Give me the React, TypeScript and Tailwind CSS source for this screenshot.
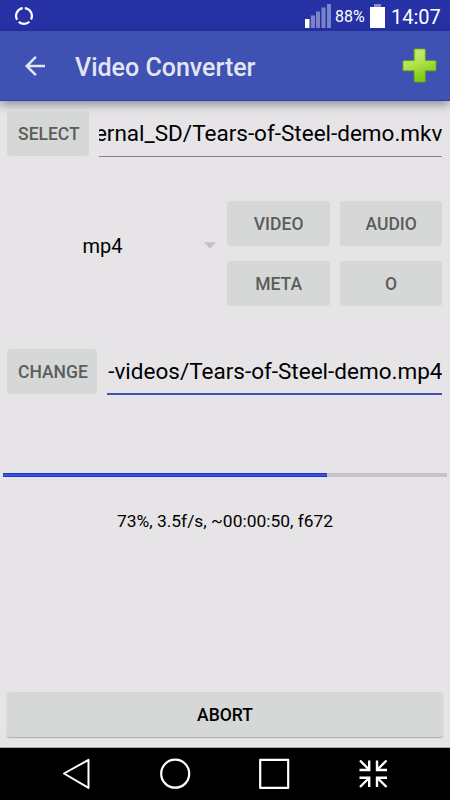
import React, { useState } from "react";

const buttonClass =
  "flex h-[45px] items-center justify-center rounded-[3px] bg-[#d6d8d7] pt-[3px] text-[17.5px] leading-none font-medium";

const StatusBar: React.FC = () => {
  return (
    <div className="flex h-[31px] items-center bg-[#2631a5] text-white">
      <svg className="ml-[14px] h-5 w-5" viewBox="0 0 20 20" fill="none" stroke="white" strokeWidth="2.2">
        <path d="M10.8 2.1A7.9 7.9 0 0 1 17 13.6" />
        <path d="M15.4 15.8A7.9 7.9 0 0 1 4.8 15.9" />
        <path d="M3.1 13.8A7.9 7.9 0 0 1 8.7 2.1" />
      </svg>
      <svg className="ml-auto h-6 w-[26px]" viewBox="0 0 26 24" fill="#7d83ca">
        <path fill="white" d="M0 15h4.5v9H0z" />
        <path d="M5.8 11.5H10V24H5.8zM11 7.500h4V24h-4zM16.500 3.500h4V24h-4zM22 0h4v24h-4z" />
      </svg>
      <span className="ml-[4px] w-[30px] pt-[2px] text-[16px] leading-none whitespace-nowrap">88%</span>
      <svg className="ml-[4px] h-6 w-4" viewBox="0 0 16 24">
        <path fill="#858bcd" d="M5 0h7v3H5z" />
        <path fill="white" d="M1 3h15v21H1z" />
      </svg>
      <span className="mr-[9px] ml-[6px] w-[50px] pt-[2px] text-[20px] leading-none whitespace-nowrap">14:07</span>
    </div>
  );
};

const AppBar: React.FC = () => {
  return (
    <header className="flex h-[70px] items-center border-b border-[#2742bd] bg-[#3f51b2] pr-[13px] pl-[20px] shadow-[0_4px_9px_rgba(0,0,0,0.35)]">
      <svg className="h-[30px] w-[30px]" viewBox="0 0 24 24" fill="#e4e5f4">
        <path d="M20 11H7.830l5.590-5.590L12 4l-8 8 8 8 1.410-1.410L7.830 13H20v-2z" />
      </svg>
      <h1 className="ml-[25px] pt-[4px] text-[25px] leading-none font-medium text-[#e4e5f4]">Video Converter</h1>
      <svg className="ml-auto h-[35px] w-[35px]" viewBox="0 0 36 36">
        <defs>
          <linearGradient id="plusFill" x1="0" y1="0" x2="0.4" y2="1">
            <stop offset="0" stopColor="#d3ef83" />
            <stop offset="0.5" stopColor="#b4e351" />
            <stop offset="1" stopColor="#7cca0c" />
          </linearGradient>
        </defs>
        <path
          d="M13.500 1h9.500q1 0 1 1V13h10q1 0 1 1v8.500q0 1-1 1H24V34q0 1-1 1h-9.500q-1 0-1-1V23.500H2q-1 0-1-1V14q0-1 1-1h10.500V2q0-1 1-1z"
          fill="url(#plusFill)"
          stroke="#65a51b"
          strokeWidth="0.8"
        />
        <path d="M13.700 13.800V2h9.200V14h10.500" fill="none" stroke="#a9e336" strokeWidth="1" />
      </svg>
    </header>
  );
};

// Single line path field, long paths are cut on the left
const PathField: React.FC<{ value: string; className: string }> = ({ value, className }) => {
  return (
    <div className={`ml-[10px] flex h-[46px] min-w-0 flex-1 items-center justify-end overflow-hidden ${className}`}>
      <span className="shrink-0 text-[22.5px] leading-none whitespace-nowrap">{value}</span>
    </div>
  );
};

const NavBar: React.FC = () => {
  return (
    <nav className="flex h-[53px] items-center border-t border-[#a6a5a8] bg-black">
      <svg className="ml-[62px] h-8 w-7" viewBox="0 0 28 32" fill="none" stroke="white" strokeWidth="2" strokeLinejoin="round">
        <path d="M26.500 1.900V29.900L2 15.500z" />
      </svg>
      <svg className="ml-[69px] h-8 w-8" viewBox="0 0 32 32" fill="none" stroke="white" strokeWidth="2.200">
        <circle cx="16.200" cy="15.700" r="14" />
      </svg>
      <svg className="ml-[67px] h-8 w-8" viewBox="0 0 32 32" fill="none" stroke="white" strokeWidth="2.200" strokeLinejoin="round">
        <path d="M2.200 1.900h28v28h-28z" />
      </svg>
      <svg className="ml-[67px] h-8 w-8" viewBox="0 0 32 32" fill="none" stroke="white" strokeWidth="2.400">
        <path d="M3 2.500l9 9M12.200 2.500V12H2.500" />
        <path d="M29.500 2.500l-9 9M20 2.500V12h10" />
        <path d="M3 29l9-9M12.200 29v-9.300H2.500" />
        <path d="M29.500 29l-9-9M20 29v-9.300h10" />
      </svg>
    </nav>
  );
};

const App: React.FC = () => {
  const [input] = useState("ernal_SD/Tears-of-Steel-demo.mkv");
  const [output] = useState("-videos/Tears-of-Steel-demo.mp4");
  const progress = 73;

  return (
    <div className="flex h-[800px] w-[450px] flex-col overflow-hidden bg-[#e6e4e7] font-[Roboto,sans-serif] text-black">
      <StatusBar />
      <AppBar />

      <main className="flex flex-1 flex-col">
        {/* Source file */}
        <div className="mt-[10px] flex h-[47px] items-start pr-[7.6px] pl-[7.4px]">
          <button className={`${buttonClass} w-[82px] shrink-0 pl-px text-[#5b5d5c]`}>SELECT</button>
          <PathField value={input} className="border-b border-[#858387]" />
        </div>

        {/* Format and stream settings */}
        <div className="mt-[43px] flex h-[105px] pr-[7.6px]">
          <div className="flex w-[227.400px] items-center pr-[11.400px] pb-[16px]">
            <span className="ml-[82.5px] text-[20px] leading-none">mp4</span>
            <svg className="ml-auto h-[7px] w-3" viewBox="0 0 12 7" fill="#c4c2c5">
              <path d="M0 .2h12L6 6.800z" />
            </svg>
          </div>
          <div className="grid flex-1 grid-cols-2 gap-x-[10px] gap-y-[15px]">
            <button className={`${buttonClass} text-[#5b5d5c]`}>VIDEO</button>
            <button className={`${buttonClass} text-[#5b5d5c]`}>AUDIO</button>
            <button className={`${buttonClass} text-[#5b5d5c]`}>META</button>
            <button className={`${buttonClass} text-[#5b5d5c]`}>O</button>
          </div>
        </div>

        {/* Destination file */}
        <div className="mt-[43px] flex h-[47px] items-start pr-[7.6px] pl-[7.4px]">
          <button className={`${buttonClass} w-[90px] shrink-0 pl-px text-[#5b5d5c]`}>CHANGE</button>
          <PathField value={output} className="border-b-2 border-[#3f51b5]" />
        </div>

        {/* Progress */}
        <div className="mx-[3px] mt-[77px] h-[4px] bg-[#c6c4c7]">
          <div className="h-full border-y border-[#1738cf] bg-[#3f51d5]" style={{ width: `${progress}%` }} />
        </div>
        <p className="mt-[36px] text-center text-[17.4px] leading-none">{progress}%, 3.5f/s, ~00:00:50, f672</p>

        <button className={`${buttonClass} mx-[7.4px] mt-auto mb-[10px] shadow-[0_1px_1px_rgba(0,0,0,0.25)]`}>ABORT</button>
      </main>

      <NavBar />
    </div>
  );
};

export default App;
